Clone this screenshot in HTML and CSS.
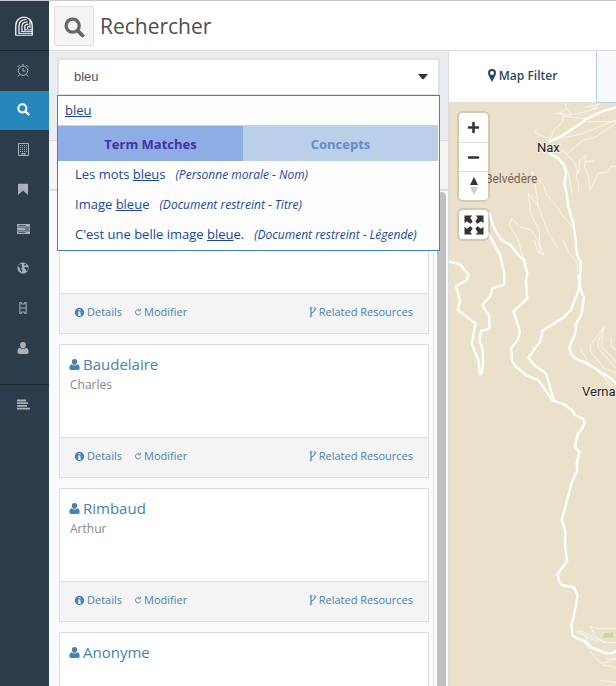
FILE: index.html
```html
<!DOCTYPE html>
<html lang="fr">
<head>
<meta charset="utf-8">
<meta name="viewport" content="width=device-width, initial-scale=1">
<title>Rechercher</title>
<link rel="stylesheet" href="styles.css">
</head>
<body>
<svg class="sprite" aria-hidden="true">
  <symbol id="i-search" viewBox="0 0 16 16"><circle cx="6.6" cy="6.6" r="5" fill="none" stroke="currentColor" stroke-width="2.5"/><path d="M10.5 10.5l3.6 3.6" stroke="currentColor" stroke-width="2.9" stroke-linecap="round"/></symbol>
  <symbol id="i-user" viewBox="0 0 12 12"><path d="M6 0a2.9 2.9 0 0 1 2.9 3C8.9 5 7.600 6.400 6 6.400S3.100 5 3.100 3A2.900 2.900 0 0 1 6 0zM3 5.700c.8.9 1.800 1.400 3 1.400s2.200-.5 3-1.400c1.700.3 2.600 1.800 2.600 4.100 0 1.300-.7 2.100-1.900 2.100H2.300C1.100 11.900.4 11.100.4 9.800.4 7.500 1.300 6 3 5.700z" fill="currentColor"/></symbol>
  <symbol id="i-info" viewBox="0 0 12 12"><path fill-rule="evenodd" d="M6 .9a5.100 5.100 0 1 0 0 10.200A5.100 5.100 0 0 0 6 .9zM5 2.300h2v1.500H5zM4.300 4.800H7v3.500h.7v1.200H4.300V8.300H5V6h-.7z" fill="currentColor"/></symbol>
  <symbol id="i-redo" viewBox="0 0 10 10"><path d="M7.600 3.200A3.300 3.300 0 1 0 8.300 6" fill="none" stroke="currentColor" stroke-width="1.100"/><path d="M5.500 3.500h2.600V1" fill="none" stroke="currentColor" stroke-width="1.100"/></symbol>
  <symbol id="i-fork" viewBox="0 0 8 12"><path d="M2 2.500v7M2 8c0-1.800 4-1.500 4-4.800" fill="none" stroke="currentColor" stroke-width="1.100"/><circle cx="2" cy="2" r="1" fill="#f5f5f5" stroke="currentColor" stroke-width=".8"/><circle cx="2" cy="10" r="1" fill="#f5f5f5" stroke="currentColor" stroke-width=".8"/><circle cx="6" cy="2.700" r="1" fill="#f5f5f5" stroke="currentColor" stroke-width=".8"/></symbol>
</svg>
<div class="app">
  <nav class="rail" aria-label="Navigation">
    <a class="logo" href="#" aria-label="Accueil">
      <svg width="18" height="20" viewBox="0 0 18 20" fill="none" stroke="#fff"><path d="M.8 19V9.300a8.200 8.200 0 0 1 16.400 0V19" stroke-width="1.300"/><path d="M4 17.500V9.800C4 6 7 3.600 11.500 3.300M7 16v-6c0-2.600 2-4 5.500-4.200M9.800 14.500v-3.700c0-1.700 1.200-2.500 3.700-2.600M12.500 13v-1.500c0-.8.700-1.200 2.300-1.200" stroke-width="1.200"/><path d="M15 4.500V12" stroke-width="1"/><path d="M.3 19.300h17.400M3.500 17.400H17M6.500 15.600H17M9.500 13.800H17" stroke-width=".9"/></svg>
    </a>
    <ul class="rail-list">
      <li><a href="#" aria-label="Récent"><svg width="12" height="13" viewBox="0 0 12 13" fill="none" stroke="currentColor"><circle cx="6" cy="6.700" r="4.700"/><path d="M6 4v3h2.500M.6 3l2-2M11.400 3l-2-2M2.500 10.500L1 12.500M9.500 10.500l1.500 2M5 .8h2"/></svg></a></li>
      <li><a class="active" href="#" aria-label="Rechercher"><svg width="13" height="13"><use href="#i-search"/></svg></a></li>
      <li><a href="#" aria-label="Ressources"><svg width="11" height="13" viewBox="0 0 11 13" fill="none" stroke="currentColor"><path d="M.5.500h10v12H.5z"/><path d="M2 2.500h7M2 4.500h7M2 6.500h7M2 8.500h7" stroke-dasharray="1 1"/><path d="M4 13v-2.500h3V13" stroke-width="1.200"/></svg></a></li>
      <li><a href="#" aria-label="Signets"><svg width="10" height="12" viewBox="0 0 10 12"><path d="M0 .8h10V12L5 7.500 0 12z" fill="currentColor"/></svg></a></li>
      <li><a href="#" aria-label="Données"><svg width="13" height="10" viewBox="0 0 13 10" fill="currentColor"><path fill-rule="evenodd" d="M0 0h13v2.800H0zM1.500 1v.8h7V1zM0 3.600h13v2.800H0zM8 4.600v.8h4v-.8zM0 7.200h13V10H0zM1.500 8.200V9h7v-.8z"/></svg></a></li>
      <li><a href="#" aria-label="Carte"><svg width="12" height="12" viewBox="0 0 12 12"><circle cx="6" cy="6" r="5.600" fill="currentColor"/><path d="M1.500 2.800L4 2l1.500.8L4.500 4l.8 1.200L4 6.400 5.500 8l-.6 2.500L3.500 8.500 2.700 6 1 4.600zM7.500 1.500l2 1-1 1.300L7 3zM8 5l3.300.4-.6 2.800-1.500 1L8.600 7.200 7.200 6.500z" fill="#2d3c4b"/></svg></a></li>
      <li><a href="#" aria-label="Modèles"><svg width="8" height="12" viewBox="0 0 8 12" fill="none" stroke="currentColor"><path d="M.8.500h1.500v1.500h3.400V.5h1.500v11H5.700V10H2.300v1.500H.8zM.8 6h6.400"/></svg></a></li>
      <li><a href="#" aria-label="Profil"><svg width="12" height="12"><use href="#i-user"/></svg></a></li>
    </ul>
    <a class="rail-end" href="#" aria-label="Menu"><svg width="13" height="11" viewBox="0 0 13 11"><path d="M0 1.500h9M0 4.200h11M0 6.900h10M0 9.600h13" stroke="currentColor" stroke-width="1.800"/></svg></a>
  </nav>
  <div class="page">
    <header class="top">
      <span class="top-icon"><svg width="21" height="21"><use href="#i-search"/></svg></span>
      <h1>Rechercher</h1>
    </header>
    <main class="columns">
      <section class="results">
        <div class="search">
          <label class="select-box"><select aria-label="Terme"><option>bleu</option></select><svg width="10" height="6" viewBox="0 0 10 6"><path d="M0 0h10L6 4.700a1.400 1.400 0 0 1-2 0z" fill="#333"/></svg></label>
          <div class="menu">
            <a class="typed" href="#">bleu</a>
            <div class="menu-tabs"><button class="on" type="button">Term Matches</button><button type="button">Concepts</button></div>
            <a class="hit" href="#">Les mots <u>bleu</u>s<em>(Personne morale - Nom)</em></a>
            <a class="hit" href="#">Image <u>bleu</u>e<em>(Document restreint - Titre)</em></a>
            <a class="hit" href="#">C'est une belle image <u>bleu</u>e.<em>(Document restreint - Légende)</em></a>
          </div>
        </div>
        <div class="filters"></div>
        <div class="list">
          <div class="cards">
            <article class="card">
              <div class="card-body"></div>
              <footer><a href="#"><svg width="11" height="11"><use href="#i-info"/></svg>Details</a><a href="#"><svg width="8" height="10"><use href="#i-redo"/></svg>Modifier</a><a class="related" href="#"><svg width="8" height="12"><use href="#i-fork"/></svg>Related Resources</a></footer>
            </article>
            <article class="card">
              <div class="card-body"><h2><svg width="11" height="11"><use href="#i-user"/></svg>Baudelaire</h2><p>Charles</p></div>
              <footer><a href="#"><svg width="11" height="11"><use href="#i-info"/></svg>Details</a><a href="#"><svg width="8" height="10"><use href="#i-redo"/></svg>Modifier</a><a class="related" href="#"><svg width="8" height="12"><use href="#i-fork"/></svg>Related Resources</a></footer>
            </article>
            <article class="card">
              <div class="card-body"><h2><svg width="11" height="11"><use href="#i-user"/></svg>Rimbaud</h2><p>Arthur</p></div>
              <footer><a href="#"><svg width="11" height="11"><use href="#i-info"/></svg>Details</a><a href="#"><svg width="8" height="10"><use href="#i-redo"/></svg>Modifier</a><a class="related" href="#"><svg width="8" height="12"><use href="#i-fork"/></svg>Related Resources</a></footer>
            </article>
            <article class="card">
              <div class="card-body"><h2><svg width="11" height="11"><use href="#i-user"/></svg>Anonyme</h2></div>
            </article>
          </div>
          <div class="track"><div class="thumb"></div></div>
        </div>
      </section>
      <section class="map-panel">
        <div class="map-tabs">
          <button class="map-tab on" type="button"><svg width="8" height="13" viewBox="0 0 8 13"><path fill-rule="evenodd" d="M4 0a4 4 0 0 1 4 4c0 1-.3 1.800-.7 2.600L4 13 .7 6.600C.3 5.800 0 5 0 4a4 4 0 0 1 4-4zm0 2a2 2 0 1 0 0 4 2 2 0 0 0 0-4z" fill="currentColor"/></svg>Map Filter</button>
          <button class="map-tab" type="button" aria-label="Time Filter"></button>
        </div>
        <div class="map">
          <svg class="map-art" aria-hidden="true">
            <g transform="translate(-9 -63) scale(.33333)" fill="none" stroke="#fff" stroke-linejoin="round" stroke-linecap="round">
              <path class="lane" d="M375 190l5 12-17 18 7 10-2 15-26 25-12 30M348 220h15l22 5 25-3 45-12 25-20M378 205l15 17M432 203l45-10M455 207l20-3M370 228l60 8M430 245h98M340 300l90-20 98-40M380 342l50-42 35-8 63-42M330 297l-30-12-17-10 7-8M365 330l15 12 25 28 7 30-4 10 9 20-2 25M415 400l5-40 17-13-2 18 25-3M437 365l-4 15 12 25 5 45 25-50 30-5 8-17 15 2M378 380l9 25 10 60M275 395l35 40 10 30 27 30 23 35 28 30M275 395l10 35 10 70M265 460l30 40 30 80 30 45M265 460l7 60 25 50 3 45 12 30M283 600l10 35 17 10M215 535l25 25 32 10 22 30 7 35M215 535l-7 22 27 43 10 40 15 30M368 600l17 35 27 35v25"/>
              <path class="lane" d="M491 862l-41 56 2 17 38 48 38 17M491 862l-16 43v20l53 60M491 862l-7 58 44 45M513 895l2 25 13 10M423 930l22 35 50 50 17 27M430 960l50 40 40 38M528 1765h-60l-18-7 15 30 30 20 33-1M495 1808l-75-36-8 3 23 13 20 37M412 1775l60 30M435 1805l27 45 28 25 38 7M490 1870l38-15M500 1857h28M480 1921l48 6"/>
              <path class="road" d="M528 203l-38 10-55 25-5 7-60 40-42 20M330 342l25 13 17 20 6 25-5 30 7 30 5 40 15 50 7 50 4 45 12 25-5 70-7 25-20 47-18 18-65 42-8 33-35 48 20 25 23 14 12 13 21 77"/>
              <path class="road" d="M415 708l7 42 10 22-7 48-17 32-2 28-18 40 4 20 13 15 35 15 65 40 23 20"/>
              <path class="road" d="M148 520l10 33 12 25 15 22 27 15 23 30 15 13 12 40-4 27 4 50-42 40 20 60-7 25-20 25 4 40 11 15 34 28 33 12 43 62 32 10 25 18 10 15 25 12 4 11-7 17-14 18-8 37 13 17-8 33 2 22-17 36-15 57-15 55 11 32-1 48 7 42-30 41 6 22 7 10 37 7 11 25-13 68-6 20 4 30 10 8 27 12 20 18 45 17h15l15-7"/>
              <path class="road" d="M145 580l35 65 13 55v30l-5 5-30 10-8 25-23 25 20 33 2 37-6 3-20 5-5 27 10 30 1 35-4 35-5 3-5-43-20-48 12-62-54-40 7-28-12-44 32-18 6-15-26-32-33-8"/>
              <path d="M487 1793l6-13 20-1 5-4 4 18z" fill="#c5dd91" stroke="none"/>
            </g>
            <text x="36" y="80" class="spot">Belvédère</text>
            <text x="88" y="49" class="town">Nax</text>
            <text x="133" y="293" class="town">Verna</text>
          </svg>
          <div class="controls">
            <div class="control-group">
              <button type="button" aria-label="Zoom avant"><svg width="13" height="13" viewBox="0 0 13 13"><path d="M6.500 2v9M2 6.500h9" stroke="#333" stroke-width="2.600" stroke-linecap="round"/></svg></button>
              <button type="button" aria-label="Zoom arrière"><svg width="13" height="13" viewBox="0 0 13 13"><path d="M2 6.500h9" stroke="#333" stroke-width="2.600" stroke-linecap="round"/></svg></button>
              <button type="button" aria-label="Nord"><svg width="8" height="18" viewBox="0 0 8 18"><path d="M4 0l4 8H0z" fill="#333"/><path d="M4 18l4-8H0z" fill="#ccc"/></svg></button>
            </div>
            <div class="control-group">
              <button type="button" aria-label="Plein écran"><svg width="20" height="20" viewBox="0 0 20 20" fill="#333"><g id="arrow"><path d="M.5.500h7.800L6.200 2.800l2.500 3.700-2.200 2.200-3.700-2.500L.5 8.300z"/></g><use href="#arrow" transform="rotate(90 10 10)"/><use href="#arrow" transform="rotate(180 10 10)"/><use href="#arrow" transform="rotate(270 10 10)"/></svg></button>
            </div>
          </div>
        </div>
      </section>
    </main>
  </div>
</div>
</body>
</html>
```
FILE: styles.css
```css
* { box-sizing: border-box; }
body { margin: 0; font: 13px/20px "Open Sans", sans-serif; color: #4d4d4d; }
a { color: inherit; text-decoration: none; }
button { margin: 0; padding: 0; border: 0; background: none; font: inherit; color: inherit; cursor: pointer; }
svg { display: block; flex: none; }
.sprite { position: absolute; width: 0; height: 0; }

.app { display: flex; height: 100vh; border-top: 1px solid #c8c8c8; overflow: hidden; }

/* Side navigation */
.rail { flex: none; width: 49px; background: #2d3c4b; color: #abb1b7; }
.logo { display: flex; align-items: center; justify-content: center; height: 50px; padding-right: 1px; border-bottom: 1px solid #1c252e; }
.rail-list { display: grid; grid-template-rows: repeat(8, 1fr); height: 317px; margin: 0 0 16px; padding: 0; list-style: none; }
.rail-list a { display: flex; align-items: center; justify-content: center; height: 100%; padding: 0 3px 1px 0; }
.rail-list .active { background: #2887ba; color: #fff; }
.rail-end { display: flex; align-items: center; justify-content: center; height: 40px; padding-right: 3px; border-top: 1px solid #1c252e; }

/* Header */
.page { flex: 1; min-width: 0; display: flex; flex-direction: column; }
.top { flex: none; display: flex; align-items: center; gap: 6px; height: 50px; padding-left: 5px; border-bottom: 1px solid #ddd; background: #fff; }
.top-icon { display: grid; place-items: center; width: 40px; height: 40px; border: 1px solid #ddd; border-radius: 2px; background: #f4f4f4; color: #666; }
.top-icon svg { margin-top: 3px; }
h1 { margin: 0; font-size: 21px; line-height: 30px; font-weight: 400; }

.columns { flex: 1; min-height: 0; display: grid; grid-template-columns: minmax(0, 399fr) minmax(0, 168fr); }

/* Search column */
.results { display: flex; flex-direction: column; min-height: 0; background: #fafafa; }
.search { position: relative; flex: none; height: 90px; padding: 7px 8px 0; border-bottom: 1px solid #ddd; background: #e9edf0; }
.select-box { display: flex; align-items: center; height: 38px; padding-right: 10px; border: 2px solid #dfe1e4; background: #fff; }
.select-box select { flex: 1; height: 34px; padding: 0 15px; border: 0; outline: 0; appearance: none; background: none; color: #555; font: 13px/20px "Liberation Sans", sans-serif; }
.menu { position: absolute; z-index: 2; top: 44px; left: 8px; right: 8px; border: 1px solid #4682b4; background: #fdfdfd; color: #1a48a0; }
.typed { display: block; padding: 4px 7px 5px; text-decoration: underline; }
.menu-tabs { display: flex; height: 36px; margin-right: 1px; border-top: 1px solid #c3d2ec; background: #bad0e9; }
.menu-tabs button { flex: 195; color: #6689cc; font-weight: 700; }
.menu-tabs .on { flex: 185; background: #8eade4; color: #4330a5; }
.hit { display: block; height: 30px; padding-left: 17px; line-height: 27px; white-space: nowrap; }
.hit:last-child { height: 29px; }
.hit em { margin-left: 10px; font-size: 12px; }
.filters { flex: none; height: 50px; border-bottom: 2px solid #ddd; background: #f4f4f4; }

/* Result cards */
.list { flex: 1; min-height: 0; display: flex; overflow: hidden; }
.cards { flex: 1; min-width: 0; display: flex; flex-direction: column; gap: 10px; padding: 9px 4px 0 10px; border-right: 1px solid #e4e4e4; }
.card { flex: none; border: 1px solid #ddd; background: #fff; }
.card-body { height: 92px; padding: 9px 9px; }
.card h2 { display: flex; align-items: center; gap: 3px; margin: 0; font-size: 15px; line-height: 20px; font-weight: 400; color: #4682b4; }
.card p { margin: 0; padding-left: 1px; font-size: 12px; line-height: 22px; color: #888; }
.card footer { display: flex; gap: 12px; height: 40px; padding: 0 15px 0 14px; border-top: 1px solid #ddd; background: #f4f4f4; color: #4682b4; font-size: 11px; }
.card footer a { display: flex; align-items: center; gap: 2px; padding-bottom: 3px; }
.card .related { margin-left: auto; }
.track { flex: none; width: 14px; padding: 1px 2px 0 3px; background: #fafafa; }
.thumb { height: 100%; border-radius: 5px 5px 0 0; background: #c1c1c1; }

/* Map column */
.map-panel { display: flex; flex-direction: column; min-width: 0; border-left: 1px solid #ddd; }
.map-tabs { flex: none; display: grid; grid-template-columns: 149fr 19fr; height: 52px; }
.map-tab { border-bottom: 1px solid #b5cde8; background: #f7f9fc; color: #25476a; font-size: 12px; font-weight: 600; }
.map-tab.on { display: flex; align-items: center; justify-content: center; gap: 3px; padding-bottom: 2px; border-right: 1px solid #b5cde8; border-bottom-color: #ddd; background: #fff; }
.map { position: relative; flex: 1; min-height: 0; overflow: hidden; background: #ebe1cb; }
.map-art { position: absolute; inset: 0; width: 100%; height: 100%; }
.lane { stroke-width: 3; opacity: .65; }
.road { stroke-width: 7; }
.town, .spot { font: 400 13px Roboto, sans-serif; fill: #222; stroke: #f5efe2; stroke-width: 2px; paint-order: stroke; }
.spot { font-size: 12px; fill: #80604f; stroke: #ebe1cb; }
.controls { position: relative; display: flex; flex-direction: column; align-items: flex-start; gap: 10px; padding: 10px; }
.control-group { border-radius: 4px; background: #fff; box-shadow: 0 0 0 2px rgba(0, 0, 0, .1); }
.control-group button { display: grid; place-items: center; width: 29px; height: 29px; }
.control-group button + button { border-top: 1px solid #ddd; }
```
